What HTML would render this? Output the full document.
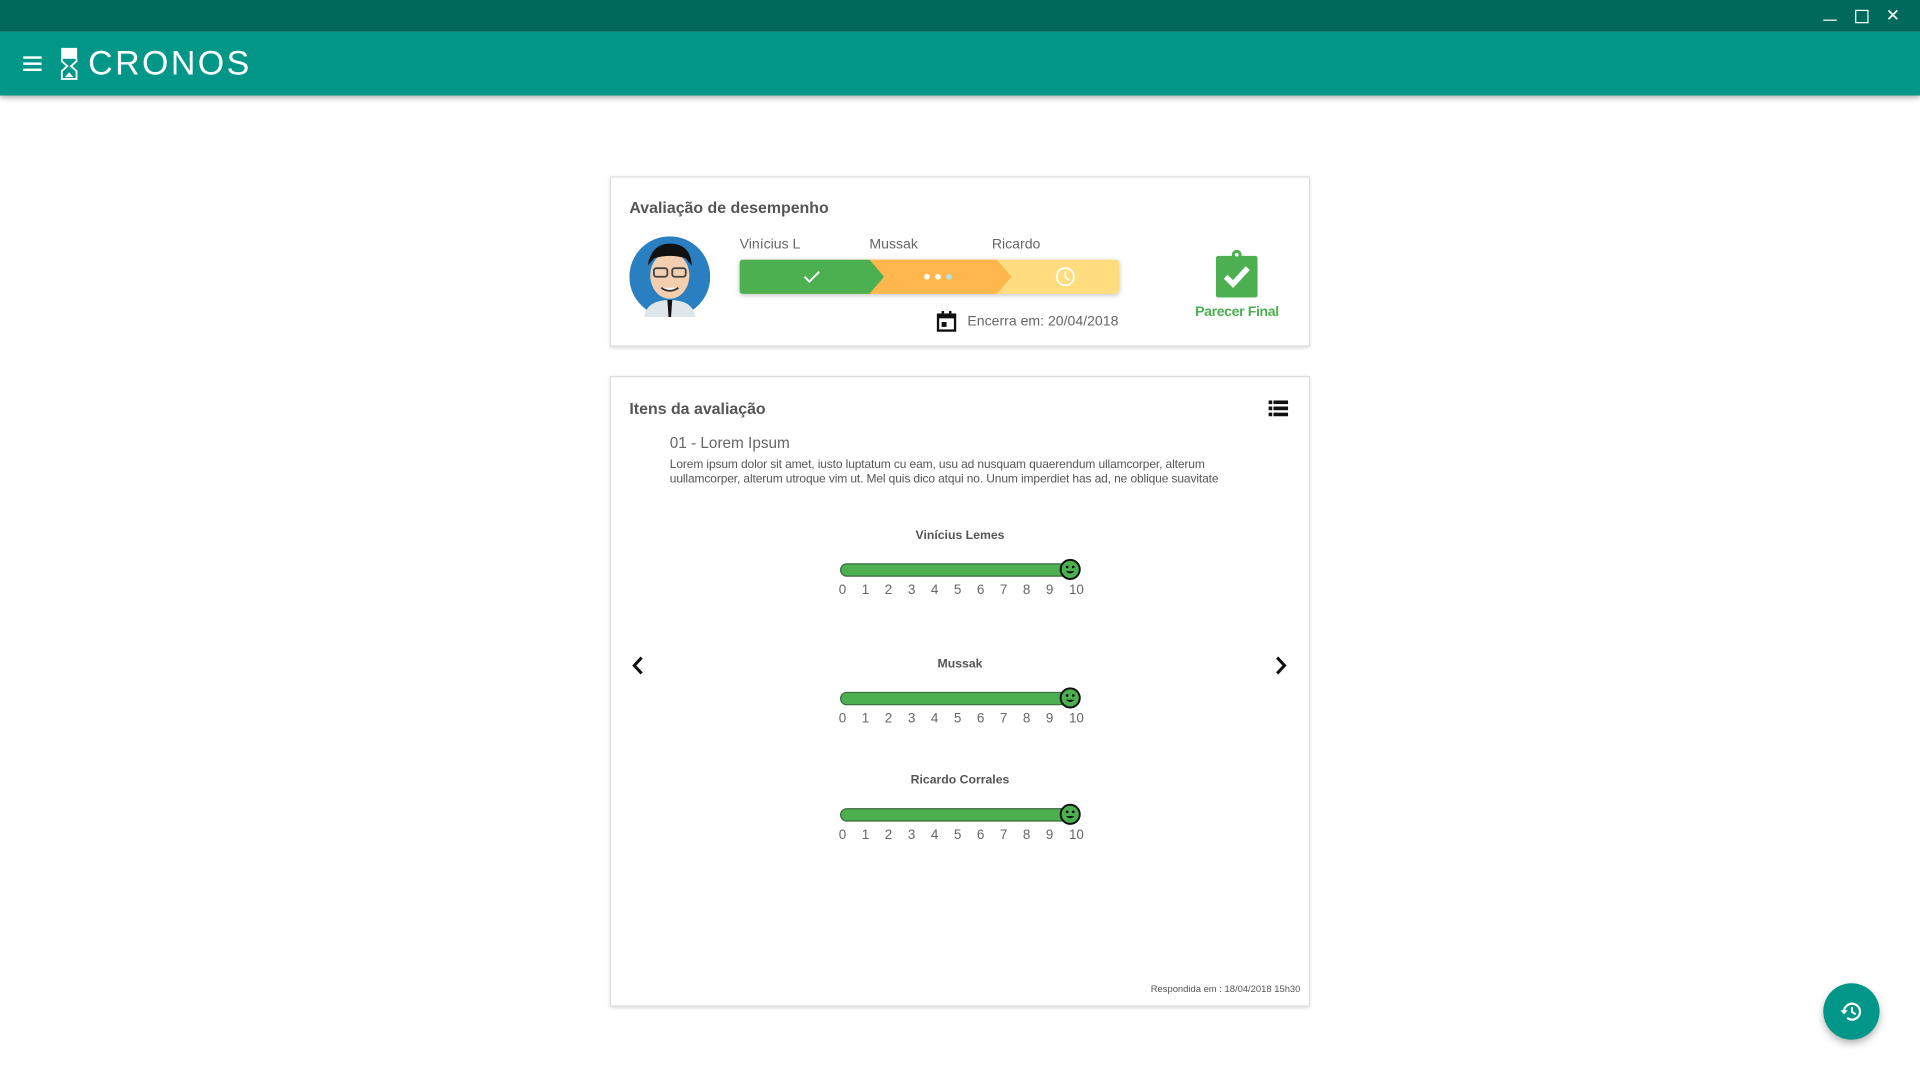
<!DOCTYPE html>
<html><head><meta charset="utf-8"><style>
html,body{margin:0;padding:0;width:1920px;height:1080px;overflow:hidden;background:#fff;font-family:"Liberation Sans",sans-serif}
#w{position:absolute;left:0;top:0;width:1568px;height:882px;transform:scale(1.22449);transform-origin:0 0}
.a{position:absolute}
.t{position:absolute;white-space:nowrap}
.card{position:absolute;background:#fff;border:1px solid #ddd;box-shadow:0 1px 3px rgba(0,0,0,.15)}
.track{position:absolute;left:686px;width:194px;height:9px;background:#4caf50;border:1px solid #3a6b3c;border-radius:6px}
.thumb{position:absolute;left:865px}
.nums{position:absolute;left:685px;font-size:11px;color:#666;letter-spacing:0}
.nums span{display:inline-block;width:18.8px;text-align:left}
.nm{position:absolute;left:684px;width:200px;text-align:center;font-size:10px;font-weight:bold;color:#555}
</style></head><body><div id="w">
<div class="a" style="left:0;top:0;width:1568px;height:26px;background:#00695c"></div>
<div class="a" style="left:1489px;top:16px;width:11px;height:1px;background:#fff"></div>
<div class="a" style="left:1515px;top:8px;width:9px;height:9px;border:1.5px solid #fff"></div>
<div class="t" style="left:1540px;top:4px;color:#fff;font-size:14px">✕</div>
<div class="a" style="left:0;top:26px;width:1568px;height:52px;background:#009688;box-shadow:0 2px 4px rgba(0,0,0,.3)"></div>
<div class="a" style="left:19px;top:46px;width:15px;height:2px;background:#fff;box-shadow:0 5px 0 #fff,0 10px 0 #fff"></div>
<svg class="a" style="left:49px;top:39px" width="15" height="27" viewBox="0 0 15 27"><rect x="1" y="0" width="13" height="9" fill="#fff"/><path d="M1.5 9 L1.5 11 L6 15 L1.5 19 L1.5 25.5 L13.5 25.5 L13.5 19 L9 15 L13.5 11 L13.5 9" fill="none" stroke="#fff" stroke-width="1.5"/><path d="M4 24 L7.5 20 L11 24Z" fill="#fff"/></svg>
<div class="t" style="left:72px;top:36px;color:#fff;font-size:28px;letter-spacing:2px;transform:scaleX(0.99);transform-origin:0 0">CRONOS</div>

<div class="card" style="left:498px;top:144px;width:570px;height:137px"></div>
<div class="t" style="left:514px;top:162px;font-size:13px;font-weight:bold;color:#555">Avaliação de desempenho</div>
<svg class="a" style="left:514px;top:193px" width="66" height="66" viewBox="0 0 66 66"><circle cx="33" cy="33" r="33" fill="#2a7fc0"/><ellipse cx="33" cy="32" rx="16" ry="19" fill="#f3cfb0"/><path d="M15 24 Q18 6 33 6 Q50 6 51 24 L46 18 Q33 14 20 18Z" fill="#111"/><rect x="20" y="26" width="11" height="7" rx="2" fill="none" stroke="#444" stroke-width="1.5"/><rect x="35" y="26" width="11" height="7" rx="2" fill="none" stroke="#444" stroke-width="1.5"/><path d="M26 42 Q33 47 40 42" stroke="#333" fill="#fff" stroke-width="1.5"/><path d="M12 66 Q14 52 33 52 Q52 52 54 66Z" fill="#dfe6ea"/><path d="M31 52 L35 52 L34 66 L32 66Z" fill="#111"/></svg>
<div class="t" style="left:604px;top:194px;font-size:11.5px;color:#666">Vinícius L</div>
<div class="t" style="left:710px;top:194px;font-size:11.5px;color:#666">Mussak</div>
<div class="t" style="left:810px;top:194px;font-size:11.5px;color:#666">Ricardo</div>
<svg class="a" style="left:604px;top:212px;filter:drop-shadow(0 1px 2px rgba(0,0,0,.25))" width="311" height="29" viewBox="0 0 311 29"><rect x="0" y="0" width="310" height="28" rx="3" fill="#ffdd7f"/><path d="M100 0 L210 0 L222 14 L210 28 L100 28Z" fill="#ffb74d"/><path d="M3 0 L106 0 L118 14 L106 28 L3 28 Q0 28 0 25 L0 3 Q0 0 3 0Z" fill="#4caf50"/><path d="M53 14 L57 18 L65 10" stroke="#fff" stroke-width="1.6" fill="none"/><circle cx="153" cy="14" r="2.3" fill="#fff"/><circle cx="162" cy="14" r="2.3" fill="#fff"/><circle cx="171" cy="14" r="2.3" fill="#b3e0f2"/><circle cx="266" cy="14" r="7" stroke="#fff" stroke-width="1.4" fill="none"/><path d="M266 9.5 L266 14 L269 17" stroke="#fff" stroke-width="1.4" fill="none"/></svg>
<svg class="a" style="left:765px;top:254px" width="16" height="17" viewBox="0 0 16 17"><rect x="1" y="3" width="14" height="13" fill="none" stroke="#111" stroke-width="2"/><rect x="1" y="3" width="14" height="3" fill="#111"/><rect x="4" y="0" width="2" height="4" fill="#111"/><rect x="10" y="0" width="2" height="4" fill="#111"/><rect x="4" y="9" width="4" height="4" fill="#111"/></svg>
<div class="t" style="left:790px;top:257px;font-size:11.5px;color:#666">Encerra em: 20/04/2018</div>
<svg class="a" style="left:992px;top:204px" width="36" height="40" viewBox="0 0 36 40"><rect x="1" y="5" width="34" height="34" rx="2" fill="#4caf50"/><circle cx="18" cy="4" r="4" fill="#4caf50"/><circle cx="18" cy="4" r="1.5" fill="#fff"/><path d="M9 22 L15 28 L27 15" stroke="#fff" stroke-width="4.5" fill="none"/></svg>
<div class="t" style="left:976px;top:249px;font-size:11.5px;font-weight:bold;color:#4caf50;letter-spacing:-0.3px">Parecer Final</div>

<div class="card" style="left:498px;top:307px;width:570px;height:513px"></div>
<div class="t" style="left:514px;top:326px;font-size:13px;font-weight:bold;color:#555">Itens da avaliação</div>
<svg class="a" style="left:1036px;top:327px" width="16" height="13" viewBox="0 0 16 13"><rect x="0" y="0" width="3" height="3" fill="#111"/><rect x="4" y="0" width="12" height="3" fill="#111"/><rect x="0" y="5" width="3" height="3" fill="#111"/><rect x="4" y="5" width="12" height="3" fill="#111"/><rect x="0" y="10" width="3" height="3" fill="#111"/><rect x="4" y="10" width="12" height="3" fill="#111"/></svg>
<div class="t" style="left:547px;top:355px;font-size:12.5px;color:#666">01 - Lorem Ipsum</div>
<div class="a" style="left:547px;top:374px;width:470px;font-size:9.8px;line-height:11.5px;color:#555;letter-spacing:-0.1px">Lorem ipsum dolor sit amet, iusto luptatum cu eam, usu ad nusquam quaerendum ullamcorper, alterum uullamcorper, alterum utroque vim ut. Mel quis dico atqui no. Unum imperdiet has ad, ne oblique suavitate</div>

<div class="nm" style="top:432px">Vinícius Lemes</div>
<div class="track" style="top:460px"></div>
<svg class="thumb" style="top:456px" width="18" height="18" viewBox="0 0 18 18"><circle cx="9" cy="9" r="7.8" fill="#4caf50" stroke="#111" stroke-width="1.6"/><circle cx="6.5" cy="7" r="1.1" fill="#111"/><circle cx="11.5" cy="7" r="1.1" fill="#111"/><path d="M5.5 10.5 Q9 14 12.5 10.5Z" fill="#111"/></svg>
<div class="nums" style="top:476px"><span>0</span><span>1</span><span>2</span><span>3</span><span>4</span><span>5</span><span>6</span><span>7</span><span>8</span><span>9</span><span>10</span></div>

<div class="nm" style="top:537px">Mussak</div>
<div class="track" style="top:565px"></div>
<svg class="thumb" style="top:561px" width="18" height="18" viewBox="0 0 18 18"><circle cx="9" cy="9" r="7.8" fill="#4caf50" stroke="#111" stroke-width="1.6"/><circle cx="6.5" cy="7" r="1.1" fill="#111"/><circle cx="11.5" cy="7" r="1.1" fill="#111"/><path d="M5.5 10.5 Q9 14 12.5 10.5Z" fill="#111"/></svg>
<div class="nums" style="top:581px"><span>0</span><span>1</span><span>2</span><span>3</span><span>4</span><span>5</span><span>6</span><span>7</span><span>8</span><span>9</span><span>10</span></div>

<div class="nm" style="top:632px">Ricardo Corrales</div>
<div class="track" style="top:660px"></div>
<svg class="thumb" style="top:656px" width="18" height="18" viewBox="0 0 18 18"><circle cx="9" cy="9" r="7.8" fill="#4caf50" stroke="#111" stroke-width="1.6"/><circle cx="6.5" cy="7" r="1.1" fill="#111"/><circle cx="11.5" cy="7" r="1.1" fill="#111"/><path d="M5.5 10.5 Q9 14 12.5 10.5Z" fill="#111"/></svg>
<div class="nums" style="top:676px"><span>0</span><span>1</span><span>2</span><span>3</span><span>4</span><span>5</span><span>6</span><span>7</span><span>8</span><span>9</span><span>10</span></div>

<svg class="a" style="left:515px;top:536px" width="12" height="15" viewBox="0 0 12 15"><path d="M9 1 L3 7.5 L9 14" stroke="#111" stroke-width="2.5" fill="none"/></svg>
<svg class="a" style="left:1040px;top:536px" width="12" height="15" viewBox="0 0 12 15"><path d="M3 1 L9 7.5 L3 14" stroke="#111" stroke-width="2.5" fill="none"/></svg>
<div class="t" style="left:900px;width:162px;text-align:right;top:803px;font-size:7.7px;color:#555">Respondida em : 18/04/2018 15h30</div>

<div class="a" style="left:1489px;top:803px;width:46px;height:46px;border-radius:50%;background:#009688;box-shadow:0 3px 6px rgba(0,0,0,.3)"></div>
<svg class="a" style="left:1502px;top:816px" width="20" height="20" viewBox="0 0 20 20"><path d="M4 10 A6.5 6.5 0 1 1 6.5 15.3" stroke="#fff" stroke-width="1.8" fill="none"/><path d="M1 9 L4 12.5 L7 9Z" fill="#fff"/><path d="M10.5 6.5 L10.5 10.5 L13.5 12.3" stroke="#fff" stroke-width="1.6" fill="none"/></svg>
</div></body></html>
